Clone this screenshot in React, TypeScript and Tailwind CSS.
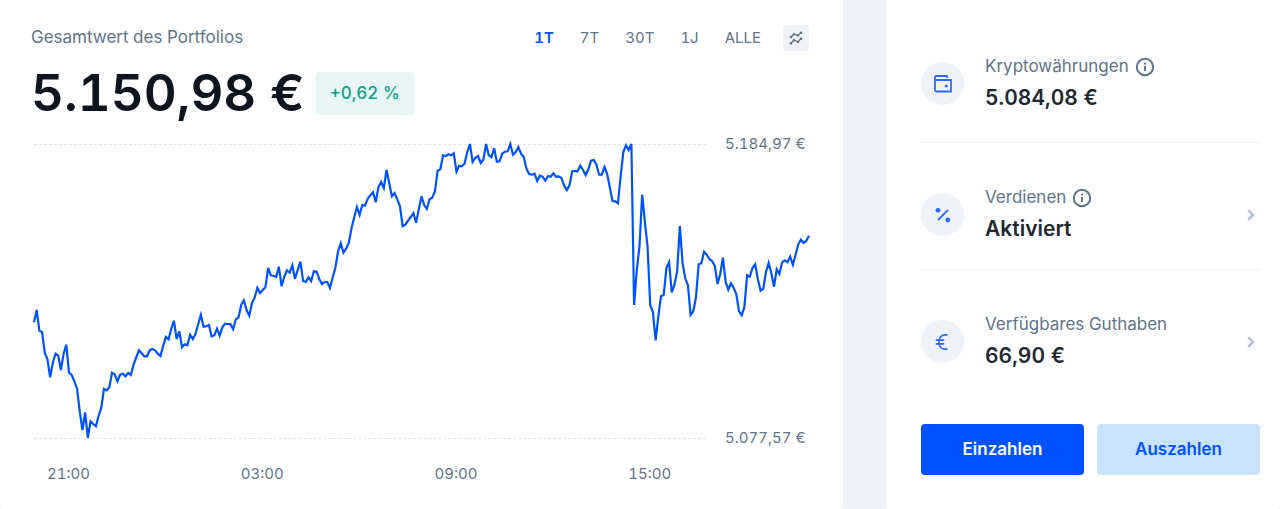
import { useState } from 'react'
import type { ReactNode } from 'react'

const CHART_HEIGHT = 294

// One sample every five minutes, measured down from the day's high (0) to the day's low (294)
const SAMPLES = [
  178.3, 166, 186.7, 188, 208.7, 215.3, 233.3, 218.7, 209.7, 211.7, 226, 209.7,
  200.7, 228.7, 231, 237.3, 244.7, 267.7, 286, 268.3, 294, 277.3, 280, 282.3,
  271.7, 263.7, 245, 246.3, 243.3, 228.7, 230.3, 237.3, 230.7, 229.7, 232.3, 229,
  231, 220.7, 213.3, 206.3, 209.3, 212.3, 212.3, 206.3, 205, 206.3, 209.7, 212,
  201.7, 193, 195.3, 185, 176.7, 195, 187.3, 203.3, 200.3, 201.3, 190.7, 195,
  190, 180.3, 171, 182.7, 182.3, 181, 192.3, 191.3, 184.7, 191.7, 183.3, 179.7,
  180, 180, 185.3, 175.3, 173.3, 161, 156.3, 166, 171.7, 159.3, 153.7, 143.7,
  149, 146, 143.3, 124, 131.3, 131.7, 133, 122.7, 142.3, 132.7, 126.3, 128.7,
  121.3, 134.7, 126, 117.7, 137, 138, 133.3, 137, 127.3, 127.7, 135, 140,
  138, 138, 144, 133.3, 123.7, 107.3, 99.3, 108.7, 104.7, 98.7, 84.3, 73.3,
  63, 71, 61, 61.7, 54.7, 51.3, 48.3, 58.3, 43, 38, 44, 26,
  39, 52.3, 49, 55.3, 62.3, 82.3, 80.7, 76.7, 73, 69, 78.7, 65.3,
  52.3, 61, 65, 55, 53.7, 47.3, 26.7, 25.3, 11.3, 12, 10.3, 11.3,
  9.3, 27.7, 21.7, 22.3, 19.7, 8, 0, 18, 13.7, 12, 19, 15.7,
  0, 11.3, 13.3, 4.3, 17.7, 17.3, 9.7, 7.7, 7.3, 0, 10.7, 8,
  3, 9.7, 13, 24.7, 30, 30.7, 29.7, 37, 31.7, 32.7, 36.7, 32,
  32.7, 29.3, 32.7, 32.3, 34, 41.7, 46, 41.3, 27.3, 27, 27.3, 21.7,
  26, 31, 25.3, 16.7, 16, 20.7, 30.7, 30.7, 23, 30, 43.7, 57,
  57.3, 59.3, 32.7, 8, 1.3, 6, 0, 161, 126, 102.7, 50.7, 77.7,
  102.7, 161, 168.3, 196.3, 172.7, 152.3, 151, 124.3, 118.3, 148.3, 140.7, 127.3,
  82, 118.7, 134.3, 141, 171, 167.3, 153.3, 120.3, 119.3, 107.7, 110.7, 115.3,
  117, 122, 140, 130.3, 113.7, 137.7, 145.7, 139.3, 144, 150.3, 167.3, 171.3,
  162.7, 131.3, 132.7, 124, 120.3, 135.3, 146.7, 144.7, 128.3, 119, 129.3, 142.7,
  125.3, 130, 118.3, 116.3, 118.3, 112.7, 120.7, 111, 100.3, 95.7, 99, 96.7,
  91.7,
]

const LINE_POINTS = SAMPLES.map((y, i) => `${i},${y}`).join(' ')

const RANGES = ['1T', '7T', '30T', '1J', 'ALLE']
const TIMES = ['21:00', '03:00', '09:00', '15:00']

function InfoIcon() {
  return (
    <svg viewBox="0 0 20 20" className="size-5" fill="none" aria-hidden="true">
      <circle cx="10" cy="10" r="8.2" stroke="currentColor" strokeWidth="2" />
      <circle cx="10" cy="6.7" r="1.1" fill="currentColor" />
      <path d="M10 9v5" stroke="currentColor" strokeWidth="2" />
    </svg>
  )
}

function ChevronIcon() {
  return (
    <svg viewBox="0 0 10 14" className="h-3.5 w-2.5 shrink-0 text-[#b8c4d6]" fill="none" aria-hidden="true">
      <path d="M2.2 2.2L7 7l-4.8 4.8" stroke="currentColor" strokeWidth="2.6" />
    </svg>
  )
}

function CompareIcon() {
  return (
    <svg viewBox="0 0 14 14" className="size-3.5" fill="none" stroke="currentColor" strokeWidth="1.2" aria-hidden="true">
      <path d="M2 6L5 3.2l4 1.2L12 1.6M2 12.200L5 9l4 2 3-3.500" />
      <g fill="currentColor" stroke="none">
        <circle cx="2" cy="6" r="1.300" />
        <circle cx="5" cy="3.300" r="1.200" />
        <circle cx="9" cy="4.400" r="1.200" />
        <circle cx="12" cy="1.700" r="1.300" />
        <circle cx="2" cy="12.200" r="1.300" />
        <circle cx="5" cy="9.200" r="1.200" />
        <circle cx="9" cy="10.900" r="1.200" />
        <circle cx="12" cy="7.700" r="1.300" />
      </g>
    </svg>
  )
}

function WalletIcon() {
  return (
    <svg viewBox="0 0 20 20" className="size-5" fill="none" aria-hidden="true">
      <path
        d="M14 4V2H3.500A1.500 1.500 0 0 0 2 3.500V16a1.500 1.500 0 0 0 1.500 1.500H18V6H3.500A1.500 1.500 0 0 1 2 4.500"
        stroke="currentColor"
        strokeWidth="1.800"
      />
      <circle cx="13.300" cy="12" r="1.600" fill="currentColor" />
    </svg>
  )
}

function PercentIcon() {
  return (
    <svg viewBox="0 0 20 20" className="size-5" fill="none" aria-hidden="true">
      <path d="M5 15L15 5" stroke="currentColor" strokeWidth="1.800" />
      <circle cx="5" cy="5.300" r="2.400" fill="currentColor" />
      <circle cx="14.800" cy="15" r="2.400" fill="currentColor" />
    </svg>
  )
}

function EuroIcon() {
  return (
    <svg viewBox="0 0 20 20" className="size-5" fill="none" stroke="currentColor" strokeWidth="1.800" aria-hidden="true">
      <path d="M14.500 2.800H12c-3.600 0-6 2.800-6 7.200s2.400 7.200 6 7.200h2.500M2.800 8.200h8.400M2.800 11.800h8.400" />
    </svg>
  )
}

interface BalanceRowProps {
  icon: ReactNode
  label: string
  value: string
  info?: boolean
  link?: boolean
}

function BalanceRow({ icon, label, value, info, link }: BalanceRowProps) {
  return (
    <div className="flex items-center">
      <span className="flex size-[43px] shrink-0 items-center justify-center rounded-full bg-[#eff3f8] text-[#2b6cff]">
        {icon}
      </span>
      <div className="ml-[21px] flex-1">
        <div className="flex h-6 items-center gap-1.5 text-[17px] text-[#5f7488]">
          {label}
          {info && (
            <button type="button" aria-label={`Info: ${label}`}>
              <InfoIcon />
            </button>
          )}
        </div>
        <div className="mt-[5px] text-[21px] leading-7 font-semibold text-[#1f2933]">{value}</div>
      </div>
      {link && (
        <button type="button" aria-label={`${label} öffnen`} className="mr-1">
          <ChevronIcon />
        </button>
      )}
    </div>
  )
}

function PortfolioChart() {
  return (
    <div className="mt-[15px]">
      <div className="relative flex h-[318px] flex-col justify-between text-[15px] text-[#5f7488]">
        {['5.184,97 €', '5.077,57 €'].map((label) => (
          <div key={label} className="flex h-6 items-center">
            <div className="flex-1 border-t border-dashed border-[#dfe6ee]" />
            <span className="ml-[19px] w-[84px] whitespace-nowrap">{label}</span>
          </div>
        ))}
        <svg
          viewBox={`0 0 ${SAMPLES.length - 1} ${CHART_HEIGHT}`}
          preserveAspectRatio="none"
          className="absolute top-3 left-0 h-[294px] w-full overflow-visible"
          fill="none"
          role="img"
          aria-label="Gesamtwert des Portfolios"
        >
          <polyline
            points={LINE_POINTS}
            stroke="#0052ff"
            strokeWidth="2.2"
            vectorEffect="non-scaling-stroke"
          />
        </svg>
      </div>
      <div className="mt-3 grid grid-cols-4 text-[15px] leading-6 text-[#5f7488]">
        {TIMES.map((time) => (
          <span key={time} className="pl-[13px]">{time}</span>
        ))}
      </div>
    </div>
  )
}

export default function App() {
  const [range, setRange] = useState('1T')

  return (
    <div className="flex min-h-screen gap-[43px] bg-[#eff3f8] font-['Inter',sans-serif] tabular-nums">
      <main className="min-w-0 flex-1 rounded-b bg-white pr-[34px] pl-[31px]">
        <div className="flex items-start justify-between pt-[25px]">
          <h1 className="text-[17px] leading-6 text-[#5f7488]">Gesamtwert des Portfolios</h1>
          <div className="flex items-center text-[15px] text-[#5f7488]">
            <div className="flex gap-[26px]">
              {RANGES.map((r) => (
                <button
                  key={r}
                  type="button"
                  aria-pressed={r === range}
                  onClick={() => setRange(r)}
                  className={r === range ? 'font-semibold text-[#0052ff]' : ''}
                >
                  {r}
                </button>
              ))}
            </div>
            <button
              type="button"
              aria-label="Vergleichen"
              className="ml-[22px] flex size-[26px] items-center justify-center rounded bg-[#eff3f8]"
            >
              <CompareIcon />
            </button>
          </div>
        </div>
        <div className="mt-4 flex items-center gap-[11px]">
          <span className="text-[51px] leading-[52px] font-semibold text-[#0f151c]">5.150,98 €</span>
          <span className="rounded bg-[#e5f6f4] px-3.5 py-2.5 text-[17px] leading-[23px] font-medium text-[#0f9f8c]">
            +0,62 %
          </span>
        </div>
        <div className="-mt-0.5 pl-[3px]">
          <PortfolioChart />
        </div>
      </main>

      <aside className="w-[394px] shrink-0 rounded-b bg-white pr-5 pl-[35px]">
        <div className="divide-y divide-[#eff3f8]">
          <div className="pt-[55px] pb-[30px]">
            <BalanceRow icon={<WalletIcon />} label="Kryptowährungen" value="5.084,08 €" info />
          </div>
          <div className="pt-[43px] pb-[26px]">
            <BalanceRow icon={<PercentIcon />} label="Verdienen" value="Aktiviert" info link />
          </div>
          <div className="pt-[43px] pb-[54px]">
            <BalanceRow icon={<EuroIcon />} label="Verfügbares Guthaben" value="66,90 €" link />
          </div>
        </div>
        <div className="grid grid-cols-2 gap-[13px] text-[17px] font-semibold">
          <button type="button" className="h-[51px] rounded bg-[#0052ff] text-white">Einzahlen</button>
          <button type="button" className="h-[51px] rounded bg-[#c8e1fd] text-[#0052ff]">Auszahlen</button>
        </div>
      </aside>
    </div>
  )
}
